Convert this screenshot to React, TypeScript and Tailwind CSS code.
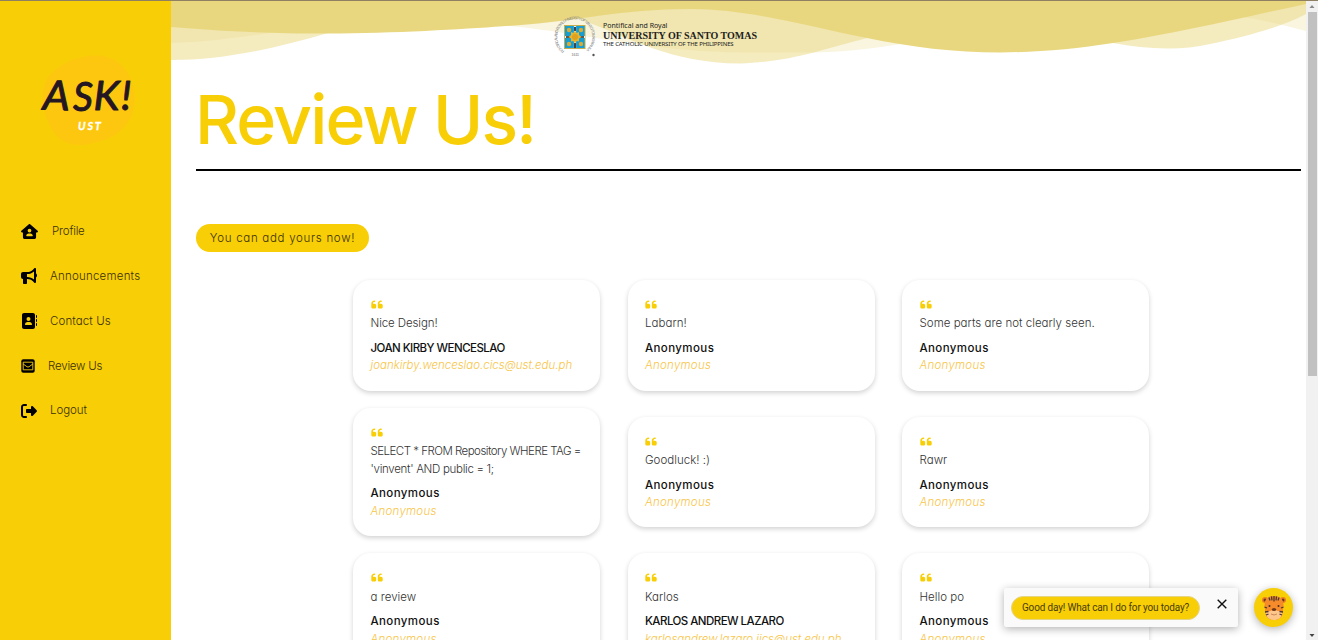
import React from "react";
import { FaHouseUser, FaBullhorn, FaAddressBook, FaRightFromBracket, FaQuoteLeft } from "react-icons/fa6";

function MailBox() {
  return (
    <svg viewBox="0 0 14 14" className="size-3.5">
      <rect x="0.300" y="0.300" width="13.400" height="13.400" rx="2" fill="#000" />
      <path d="M2.200 3.200h9.600v7.600h-9.600zM2.200 5l3.700 2.700q1.100.7 2.200 0L11.800 5" fill="none" stroke="#f8ce07" strokeWidth="0.900" />
    </svg>
  );
}

const nav = [
  { icon: <FaHouseUser className="h-[15px] w-[17px]" />, label: "Profile", gap: "gap-[14px]", track: "tracking-[-0.200px]" },
  { icon: <FaBullhorn className="size-4" />, label: "Announcements", gap: "gap-[13px]", track: "tracking-[0.220px]" },
  { icon: <FaAddressBook className="size-4" />, label: "Contact Us", gap: "gap-[13px]", track: "tracking-[0.120px]" },
  { icon: <MailBox />, label: "Review Us", gap: "gap-[13px]", track: "tracking-[-0.200px]" },
  { icon: <FaRightFromBracket className="size-4" />, label: "Logout", gap: "gap-[13px]", track: "tracking-[-0.050px]" },
];

type Review = { lines: string[]; name: string; email: string };
const anon = { name: "Anonymous", email: "Anonymous" };
const reviews: Review[] = [
  { lines: ["Nice Design!"], name: "JOAN KIRBY WENCESLAO", email: "joankirby.wenceslao.cics@ust.edu.ph" },
  { lines: ["Labarn!"], ...anon },
  { lines: ["Some parts are not clearly seen."], ...anon },
  { lines: ["SELECT * FROM Repository WHERE TAG =", "'vinvent' AND public = 1;"], ...anon },
  { lines: ["Goodluck! :)"], ...anon },
  { lines: ["Rawr"], ...anon },
  { lines: ["a review"], ...anon },
  { lines: ["Karlos"], name: "KARLOS ANDREW LAZARO", email: "karlosandrew.lazaro.iics@ust.edu.ph" },
  { lines: ["Hello po"], ...anon },
];

function AskLogo() {
  return (
    <svg viewBox="0 0 110 110" className="ml-8 mt-[45px] size-[110px]">
      <path d="M62 10.500C82 9 101 24 102.500 50C104 78 86 92 65 97C46 103 28 102 17 79C10 64 8 50 14 36C23 20 43 11.500 62 10.500Z" fill="#fec70f" />
      <g fill="#241622" stroke="#241622" strokeWidth="1" strokeLinejoin="round" fontFamily="Lato" fontStyle="italic" fontWeight="400" fontSize="41">
        <text x="11" y="65" textLength="27" lengthAdjust="spacingAndGlyphs" transform="rotate(2 22 50)">A</text>
        <text x="41" y="65.500" textLength="20" lengthAdjust="spacingAndGlyphs">S</text>
        <text x="61.500" y="65" textLength="26" lengthAdjust="spacingAndGlyphs">K</text>
        <text x="89" y="65">!</text>
      </g>
      <text x="46" y="85" textLength="23" fill="#fff" stroke="#fff" strokeWidth="0.300" fontFamily="Lato" fontStyle="italic" fontWeight="700" fontSize="11">UST</text>
    </svg>
  );
}

function Waves() {
  return (
    <svg viewBox="171 0 1135 70" preserveAspectRatio="none" className="absolute inset-x-0 top-0 h-[70px] w-full" fill="#e9d77f">
      <path opacity="0.25" d="M171 0V43C205 42 235 38 270 33C350 19 430 19 510 26C590 34 650 52 745 52.500H815C850 52 890 46 920 41C1010 20 1120 -12 1235 16C1262 20 1285 25 1306 31V0Z" />
      <path opacity="0.5" d="M171 0V60C220 60 270 50 328 33C420 6 520 1 580 19C630 38 670 63 740 63.500C790 62 820 50 867 38C950 17 1020 23 1113 43C1145 49 1180 51 1210 44C1250 36 1283 26 1306 14V0Z" />
      <path d="M171 0V27C220 31 270 34 340 33.500C410 33 480 28 515 25.500C580 21 620 9 690 9C750 9 805 26 867 38C910 47 955 52.500 1000 52.500C1040 52 1075 49 1113 43C1180 33 1240 18 1306 4V0Z" />
    </svg>
  );
}

function UstSeal() {
  return (
    <svg viewBox="0 0 42 44" className="size-full">
      <defs>
        <path id="ring" d="M10.500 37A17.500 17.500 0 1 1 31 37" />
      </defs>
      <text fontSize="4" fill="#888" fontFamily="Liberation Sans">
        <textPath href="#ring" textLength="86" lengthAdjust="spacing">PONTIFICAL AND ROYAL UNIVERSITY OF SANTO TOMAS MANILA</textPath>
      </text>
      <text x="17.500" y="42" fontSize="3.500" fill="#666" fontFamily="Liberation Sans">1611</text>
      <circle cx="39.500" cy="41" r="1.200" fill="#555" />
      <rect x="10.500" y="11.500" width="20.500" height="23" fill="#169ed2" stroke="#c6ad4d" />
      <path d="M21 12V34M11 23H31" stroke="#eef4f5" strokeWidth="2.200" />
      <path d="M21 13v4M21 29v5M12 23h4M26 23h4" stroke="#242629" strokeWidth="1.700" />
      <g fill="#dbaa32">
        <circle cx="15" cy="16" r="2.200" /><circle cx="27" cy="16" r="2.200" />
        <circle cx="15" cy="30" r="2.200" /><circle cx="27" cy="30" r="2.200" />
      </g>
      <path d="M21 16.500l1.500 2.500 2.500-1v3l2.500 2-2.500 1.500v3l-2.500-.5-1.500 2.500-1.500-2.500-2.500.5v-3l-2.500-1.500 2.500-2v-3l2.500 1z" fill="#eab52b" />
      <circle cx="21" cy="23" r="3" fill="#dfa220" />
    </svg>
  );
}

function Tiger() {
  return (
    <svg viewBox="0 0 26 26" className="size-[26px]">
      <circle cx="4" cy="5" r="3" fill="#ee7e22" /><circle cx="22" cy="5" r="3" fill="#ee7e22" />
      <circle cx="4" cy="5" r="1.500" fill="#6a3a20" /><circle cx="22" cy="5" r="1.500" fill="#6a3a20" />
      <path d="M3.500 11C3.500 4 7 1 13 1S22.500 4 22.500 11L21.500 19C20.500 23 17 25 13 25S5.500 23 4.500 19Z" fill="#f58b2b" />
      <path d="M13 13C10 18 4.500 15 4.500 18C5.500 23 9 25 13 25S20.500 23 21.500 18C21.500 15 16 18 13 13Z" fill="#ffc68c" />
      <path d="M13 1v5.500M10.500 1.300l.5 4M15.500 1.300l-.5 4M8 2.500l1 3M18 2.500l-1 3M3.500 12l2.500 1M22.500 12l-2.500 1M4 17l3.500-.5M22 17l-3.500-.5M5 20l2.500-1M21 20l-2.500-1" stroke="#4b3734" strokeWidth="1.300" />
      <circle cx="8.500" cy="11" r="1" fill="#4b2a20" /><circle cx="17.500" cy="11" r="1" fill="#4b2a20" />
      <ellipse cx="13" cy="14.500" rx="2.200" ry="1.500" fill="#703718" />
      <path d="M10 19q3 2 6 0" fill="none" stroke="#bd7a4a" strokeWidth=".8" />
    </svg>
  );
}

function Card({ review }: { review: Review }) {
  const anonymous = review.name === "Anonymous";
  return (
    <article className="whitespace-nowrap rounded-[18px] bg-white px-[17.500px] pb-[16px] pt-[16px] text-[11.500px] leading-[17.300px] shadow-[0_2px_5px_rgba(0,0,0,0.18)]">
      <div className="mb-[2.200px] flex h-[17px] items-center"><FaQuoteLeft className="h-[13px] w-3 text-[#f8ce07]" /></div>
      {review.lines.map((line) => (
        <p key={line} className={"font-light text-[#333] " + (line.startsWith("SELECT") ? "tracking-[-0.520px]" : line.startsWith("'") ? "tracking-[-0.300px]" : line.startsWith("Nice") ? "tracking-[-0.100px]" : "tracking-[0.030px]")}>{line}</p>
      ))}
      <p className={"mt-[7.500px] font-medium text-[#111] " + (anonymous ? "tracking-[0.400px]" : "tracking-[-0.540px]")}>{review.name}</p>
      <p className={"font-light italic text-[#f8c548] " + (anonymous ? "tracking-[0.250px]" : "tracking-[-0.020px]")}>{review.email}</p>
    </article>
  );
}

export default function App() {
  return (
    <div className="relative flex h-[640px] w-[1318px] overflow-hidden bg-white font-['Inter',sans-serif] [font-feature-settings:'cv11']">
      <div className="absolute inset-x-0 top-0 z-20 h-px bg-[#8e8060]" />
      <aside className="flex w-[171px] shrink-0 flex-col bg-[#f8ce07]">
        <AskLogo />
        <nav className="ml-[21px] mt-[54px] flex flex-col">
          {nav.map((n) => (
            <a key={n.label} className={"flex h-[44.800px] items-center text-[11.500px] font-light text-[#3a3000] " + n.gap + " " + n.track}>
              <span className="text-black">{n.icon}</span><span className="pt-px">{n.label}</span>
            </a>
          ))}
        </nav>
      </aside>
      <main className="relative min-w-0 flex-1">
        <Waves />
        <header className="relative flex h-[70px] pl-[383px] pt-[14px]">
          <div className="h-[44px] w-[42px]"><UstSeal /></div>
          <div className="ml-[7px] mt-1.5 whitespace-nowrap text-[#222]">
            <div className="font-['Noto_Sans'] text-[7px] leading-[11px]">Pontifical and Royal</div>
            <div className="font-['Liberation_Serif'] text-[10px] font-bold leading-[9px]">UNIVERSITY OF SANTO TOMAS</div>
            <div className="font-['Noto_Sans'] text-[6px] leading-[9px] tracking-[-0.130px]">THE CATHOLIC UNIVERSITY OF THE PHILIPPINES</div>
          </div>
        </header>
        <section className="pl-[25px] pr-[5px]">
          <h1 className="-ml-px h-[99px] whitespace-nowrap text-[68px] font-medium leading-[99px] tracking-[-1.900px] text-[#f8ce07]">Review Us!</h1>
          <hr className="h-0.5 border-0 bg-black" />
          <button className="mt-[53px] block h-7 w-[173px] rounded-full bg-[#f8ce07] pt-0.5 text-[11.500px] font-light tracking-[0.700px] text-[#3a3000]">You can add yours now!</button>
          <div className="ml-[157px] mt-[28px] grid grid-cols-[247px_247px_247px] items-center gap-x-[27.500px] gap-y-[17.500px]">
            {reviews.map((r, i) => <Card key={i} review={r} />)}
          </div>
        </section>
      </main>
      <div className="z-10 mt-px flex w-3 shrink-0 flex-col items-center bg-[#f1f1f1]">
        <svg viewBox="0 0 12 11" className="h-[11px] w-3"><path d="M6 4l2.500 3h-5z" fill="#888" /></svg>
        <div className="h-[364px] w-[9px] bg-[#c1c1c1]" />
        <svg viewBox="0 0 12 11" className="mt-auto h-[11px] w-3"><path d="M6 8l2.500-3h-5z" fill="#444" /></svg>
      </div>
      <div className="absolute left-[1004px] top-[588px] flex h-[39px] w-[234px] items-center rounded-[2px] bg-[#fafafa] pl-[7px] shadow-[0_2px_9px_rgba(0,0,0,0.3)]">
        <div className="flex h-6 w-[189px] items-center justify-center whitespace-nowrap rounded-full border border-[#e5d484] bg-[#f8ce07] font-['Roboto'] text-[10px] tracking-[-0.160px] text-[#4a3d00]">Good day! What can I do for you today?</div>
        <svg viewBox="0 0 10 10" className="mb-2 ml-[17px] size-2.5"><path d="M.7.7l8.600 8.600M9.300.7L.7 9.300" stroke="#111" strokeWidth="1.400" /></svg>
      </div>
      <div className="absolute left-[1254px] top-[588px] flex size-[39px] items-center justify-center rounded-full bg-[#f8ce07] shadow-[0_2px_8px_rgba(0,0,0,0.3)]"><Tiger /></div>
    </div>
  );
}
